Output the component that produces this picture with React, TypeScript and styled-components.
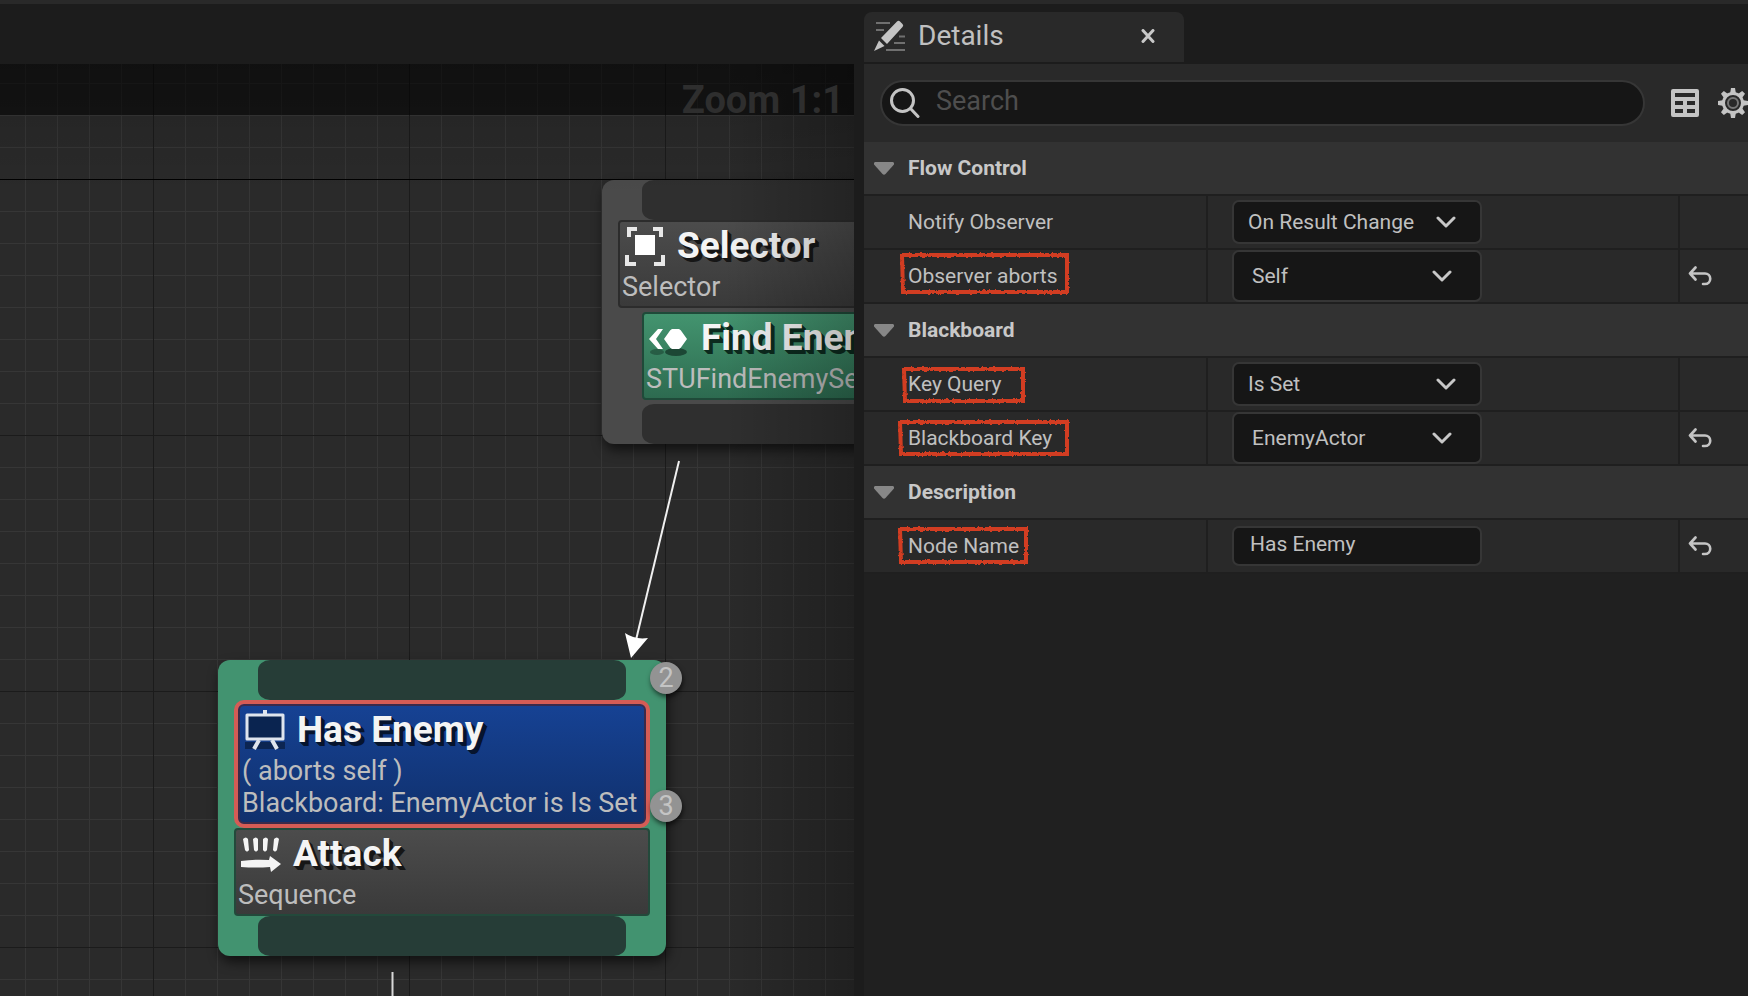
import React from "react";
import styled, { createGlobalStyle } from "styled-components";

const GlobalStyle = createGlobalStyle`
  *, *::before, *::after { box-sizing: border-box; }
  body { margin: 0; background: #1c1c1c; color: #c0c0c0; font-family: Roboto, "Liberation Sans", sans-serif; }
  button, input, select { font: inherit; color: inherit; }
`;

const Editor = styled.div`
  display: grid;
  grid-template-columns: minmax(0, 427fr) minmax(0, 442fr);
  column-gap: 10px;
  min-height: 100vh;
  overflow: hidden;
  border-top: 4px solid #292929;
  background: #1c1c1c;
`;

/* ---------- graph ---------- */

const GraphColumn = styled.main`
  display: flex;
  flex-direction: column;
  padding-top: 60px;
`;

const Canvas = styled.section`
  position: relative;
  flex: 1;
  overflow: hidden;
  background-color: #2a2a2a;
  background-image:
    linear-gradient(#000, #000),
    linear-gradient(90deg, #1b1b1b 1px, transparent 1px),
    linear-gradient(#1b1b1b 1px, transparent 1px),
    linear-gradient(90deg, #363636 1px, transparent 1px),
    linear-gradient(#363636 1px, transparent 1px);
  background-size: 100% 1px, 256px 256px, 256px 256px, 32px 32px, 32px 32px;
  background-position: 0 115px, 153px 0, 0 115px, 25px 0, 0 19px;
  background-repeat: no-repeat, repeat, repeat, repeat, repeat;
`;

const Vignette = styled.div`
  position: absolute;
  inset: 0;
  pointer-events: none;
  background:
    linear-gradient(rgba(0, 0, 0, 0.16), transparent 130px),
    linear-gradient(270deg, rgba(0, 0, 0, 0.24), transparent 130px);
`;

const ZoomBar = styled.div`
  position: absolute;
  top: 0;
  left: 0;
  right: 0;
  height: 51px;
  padding-right: 10px;
  background: rgba(0, 0, 0, 0.52);
  color: #2e2e2e;
  font-size: 38px;
  font-weight: 700;
  line-height: 72px;
  text-align: right;
  white-space: nowrap;
`;

const Wires = styled.svg`
  position: absolute;
  top: 0;
  left: 0;
  width: 100%;
  height: 100%;
`;

const Node = styled.article<{ $x: number; $y: number; $w: number; $tone: string }>`
  position: absolute;
  left: ${(p) => p.$x}px;
  top: ${(p) => p.$y}px;
  width: ${(p) => p.$w}px;
  padding: 0 16px;
  border-radius: 12px;
  background: ${(p) => p.$tone};
  box-shadow: 2px 6px 12px rgba(0, 0, 0, 0.6);
`;

const Pin = styled.div<{ $tone: string }>`
  height: 40px;
  margin: 0 24px;
  border-radius: 12px / 10px;
  background: ${(p) => p.$tone};
`;

const Block = styled.div<{ $tone: string; $edge: string; $inset?: boolean }>`
  height: 88px;
  margin-left: ${(p) => (p.$inset ? 24 : 0)}px;
  margin-top: ${(p) => (p.$inset ? 4 : 0)}px;
  margin-bottom: ${(p) => (p.$inset ? 4 : 0)}px;
  padding: 2px;
  border: 2px solid ${(p) => p.$edge};
  border-radius: 4px;
  background: ${(p) => p.$tone};
`;

const SelectedBlock = styled(Block)`
  height: 128px;
  padding: 4px 4px 0;
  border: 4px solid #d55c55;
  border-radius: 10px;
  box-shadow: inset 0 0 0 2px #3b2a4a;
`;

const NodeHeading = styled.div`
  display: flex;
  align-items: center;
  gap: 12px;
  height: 44px;
  margin-bottom: 3px;
  padding-left: 3px;
`;

const NodeTitle = styled.h2<{ $shade: string }>`
  margin: 0;
  color: #f4f4f4;
  font-size: 37px;
  font-weight: 700;
  line-height: 40px;
  white-space: nowrap;
  text-shadow: 1px 1px 0 ${(p) => p.$shade}, 2px 2px 0 ${(p) => p.$shade}, 3px 3px 0 ${(p) => p.$shade}, 4px 4px 0 ${(p) => p.$shade};
`;

const NodeText = styled.p`
  margin: 0;
  color: #bdbdbd;
  font-size: 27px;
  line-height: 32px;
  white-space: nowrap;
`;

const Badge = styled.span<{ $y: number }>`
  position: absolute;
  right: -16px;
  top: ${(p) => p.$y}px;
  width: 32px;
  height: 32px;
  border-radius: 50%;
  background: #939393;
  color: #c4c4c4;
  font-size: 27px;
  line-height: 32px;
  text-align: center;
  box-shadow: 1px 3px 5px rgba(0, 0, 0, 0.6);
`;

/* ---------- details panel ---------- */

const Panel = styled.aside`
  display: flex;
  flex-direction: column;
  min-width: 0;
  padding-top: 8px;
`;

const Tab = styled.div`
  display: flex;
  align-items: center;
  width: 320px;
  height: 50px;
  margin-bottom: 2px;
  padding: 0 29px 3px 10px;
  border-radius: 8px 8px 0 0;
  background: #292929;
`;

const TabTitle = styled.h1`
  flex: 1;
  margin: 0 0 0 12px;
  font-size: 28px;
  font-weight: 400;
  line-height: 40px;
`;

const IconButton = styled.button`
  display: flex;
  align-items: center;
  justify-content: center;
  flex: none;
  padding: 0;
  border: 0;
  background: none;
  color: #c4c4c4;
`;

const PanelBody = styled.div`
  flex: 1;
  background: #202020;
`;

const Toolbar = styled.div`
  display: flex;
  align-items: center;
  height: 78px;
  padding-left: 16px;
  background: #292929;
`;

const SearchBox = styled.label`
  display: flex;
  align-items: center;
  flex: 1;
  min-width: 0;
  height: 46px;
  margin-right: 26px;
  padding: 0 20px 0 8px;
  border: 2px solid #363636;
  border-radius: 23px;
  background: #161616;
`;

const SearchInput = styled.input`
  flex: 1;
  min-width: 0;
  height: 36px;
  margin: 0 0 4px 16px;
  padding: 0;
  border: 0;
  outline: 0;
  background: none;
  font-size: 27px;
  &::placeholder { color: #4e4e4e; opacity: 1; }
`;

const ToolIcons = styled.div`
  display: flex;
  align-items: center;
  gap: 19px;
`;

const SectionHeader = styled.h3`
  display: flex;
  align-items: center;
  gap: 14px;
  height: 54px;
  margin: 0;
  padding-left: 10px;
  border-bottom: 2px solid #1f1f1f;
  background: #323232;
  color: #c8c8c8;
  font-size: 21px;
  font-weight: 700;
`;

const Row = styled.div`
  display: grid;
  grid-template-columns: 344px minmax(0, 1fr) 68px;
  height: 54px;
  border-bottom: 2px solid #1f1f1f;
  background: #292929;
`;

const Cell = styled.div<{ $kind: "label" | "value" | "reset" }>`
  display: flex;
  align-items: center;
  padding-left: ${(p) => ({ label: 44, value: 24, reset: 8 })[p.$kind]}px;
  border-right: ${(p) => (p.$kind === "reset" ? "0" : "2px solid #1f1f1f")};
`;

const Label = styled.label`
  position: relative;
  font-size: 21px;
  line-height: 28px;
  white-space: nowrap;
`;

const Marker = styled.svg`
  position: absolute;
  overflow: visible;
  pointer-events: none;
`;

const Picker = styled.div<{ $tall?: boolean }>`
  display: grid;
  align-items: center;
  width: 250px;
  height: ${(p) => (p.$tall ? 52 : 44)}px;
  > * { grid-area: 1 / 1; }
  > svg { justify-self: end; margin-right: ${(p) => (p.$tall ? 30 : 26)}px; pointer-events: none; }
`;

const Select = styled.select<{ $tall?: boolean }>`
  appearance: none;
  width: 100%;
  height: 100%;
  padding: 0 50px 0 ${(p) => (p.$tall ? 18 : 14)}px;
  border: 2px solid #363636;
  border-radius: 7px;
  background: #161616;
  font-size: 21px;
`;

const TextField = styled.input`
  width: 250px;
  height: 40px;
  padding: 0 16px 4px;
  border: 2px solid #363636;
  border-radius: 7px;
  background: #161616;
  font-size: 21px;
`;

/* ---------- icons ---------- */

const TreeIcon = () => (
  <svg width="20" height="13" viewBox="0 0 20 13">
    <path d="M1 0h18q2 1 0.500 3l-8 9q-1.500 1.500-3 0l-8-9q-1.500-2 0.500-3z" fill="#878787" />
  </svg>
);

const ChevronIcon = () => (
  <svg width="20" height="12" viewBox="0 0 20 12" fill="none" stroke="#c8c8c8" strokeWidth="3" strokeLinecap="round" strokeLinejoin="round">
    <path d="M2 2l8 8 8-8" />
  </svg>
);

const ResetIcon = () => (
  <svg width="24" height="20" viewBox="0 0 24 20" fill="none" stroke="#c4c4c4" strokeWidth="2.600" strokeLinecap="round" strokeLinejoin="round">
    <path d="M7.500 1.500L2 7.500l5.500 6M2 7.500h15a5 5 0 0 1 0 10.500h-2" />
  </svg>
);

const DetailsIcon = () => (
  <svg width="32" height="32" viewBox="0 0 32 32">
    <path d="M2 3h14M2 10h8M25 16.500h6M20 23h11M12 30h19" stroke="#707070" strokeWidth="2" />
    <path d="M23 1.500q1.500-1.500 3 0l2.500 2.500q1.500 1.500 0 3L13 24 7 18z" fill="#c4c4c4" />
    <path d="M5 20.500l5.500 5.500L0 31z" fill="#c4c4c4" />
  </svg>
);

const CloseIcon = () => (
  <svg width="14" height="14" viewBox="0 0 14 14" stroke="#c8c8c8" strokeWidth="3" strokeLinecap="round">
    <path d="M2 1.500l10 11M12 1.500L2 12.500" />
  </svg>
);

const SearchIcon = () => (
  <svg width="30" height="30" viewBox="0 0 30 30" fill="none" stroke="#c4c4c4" strokeWidth="3" strokeLinecap="round">
    <circle cx="12.500" cy="12.500" r="11" />
    <path d="M20.500 20.500l7.500 8" />
  </svg>
);

const TableIcon = () => (
  <svg width="28" height="28" viewBox="0 0 28 28">
    <path fillRule="evenodd" fill="#c4c4c4" d="M2 0h24a2 2 0 0 1 2 2v24a2 2 0 0 1-2 2H2a2 2 0 0 1-2-2V2a2 2 0 0 1 2-2zM4 4v4h20V4zM4 12v4h8v-4zM16 12v4h8v-4zM4 20v4h8v-4zM16 20v4h8v-4z" />
  </svg>
);

const GearIcon = () => (
  <svg width="30" height="30" viewBox="-15 -15 30 30" fill="none">
    {[0, 45, 90, 135, 180, 225, 270, 315].map((a) => (
      <path key={a} transform={`rotate(${a})`} d="M-3 -9L-2 -15h4L3 -9z" fill="#c4c4c4" />
    ))}
    <circle r="9.500" stroke="#c4c4c4" strokeWidth="3" />
    <circle r="5" stroke="#777" strokeWidth="2" />
  </svg>
);

const SelectorIcon = () => (
  <svg width="40" height="40" viewBox="0 0 40 40">
    <path d="M4 11V3h8M28 3h8v8M38 29v9h-9M11 38H2v-9" fill="none" stroke="#e8e8e8" strokeWidth="4" />
    <path d="M10 9h20v20H10z" fill="#fff" />
  </svg>
);

const ServiceIcon = () => (
  <svg width="40" height="36" viewBox="0 0 40 36">
    <ellipse cx="27" cy="32" rx="11" ry="4" fill="#15382a" opacity="0.8" />
    <ellipse cx="8" cy="32" rx="7" ry="3" fill="#15382a" opacity="0.5" />
    <path d="M9 9h5L7 19l7 10H9L0 19z" fill="#fff" />
    <path d="M23 9h7q2 1 3 3l5 7-5 7q-1 2-3 3h-7q-2-1-3-3l-5-7 5-7q1-2 3-3z" fill="#fff" />
  </svg>
);

const BoardIcon = () => (
  <svg width="40" height="40" viewBox="0 0 40 40" fill="none" stroke="#dfe5ee">
    <path d="M0 32h40v7H0z" fill="#0c2552" stroke="none" />
    <path d="M2 5h36v24H2z" fill="#0a2450" strokeWidth="3" strokeLinejoin="round" />
    <path d="M20 0v5M14 30l-5 9M27 30l5 9" strokeWidth="4" />
  </svg>
);

const SequenceIcon = () => (
  <svg width="40" height="36" viewBox="0 0 40 36" fill="#f4f4f4">
    <path d="M2 3q3-3 5 0l1 11q-2 3-4 0zM12 3q3-3 5 0v11q-2 3-4 0zM22 3q3-3 5 0l-1 11q-2 3-4 0zM33 3q3-3 5 0l-2 11q-2 3-4 0z" />
    <path d="M0 25q14-2 28-1l1-4 11 8-10 8-1-5q-14 1-29 0z" />
  </svg>
);

/* hand-drawn red frame round a property name */
const Highlight = ({ x, y, w, h }: { x: number; y: number; w: number; h: number }) => (
  <Marker style={{ left: x, top: y }} width={w} height={h} fill="none">
    <filter id={`rough${w}`} x="-10%" y="-20%" width="120%" height="140%">
      <feTurbulence type="fractalNoise" baseFrequency="0.35" numOctaves="2" />
      <feDisplacementMap in="SourceGraphic" scale="3" xChannelSelector="R" yChannelSelector="G" />
    </filter>
    <path d={`M2 2H${w - 2}V${h - 2}H3Z`} stroke="#d23c20" strokeWidth="4" filter={`url(#rough${w})`} />
  </Marker>
);

type Property = {
  name: string;
  value: string;
  kind: "select" | "tallSelect" | "text";
  reset?: boolean;
  mark?: { x: number; y: number; w: number; h: number };
};

const sections: { title: string; rows: Property[] }[] = [
  {
    title: "Flow Control",
    rows: [
      { name: "Notify Observer", value: "On Result Change", kind: "select" },
      { name: "Observer aborts", value: "Self", kind: "tallSelect", reset: true, mark: { x: -8, y: -9, w: 169, h: 41 } },
    ],
  },
  {
    title: "Blackboard",
    rows: [
      { name: "Key Query", value: "Is Set", kind: "select", mark: { x: -6, y: -3, w: 123, h: 36 } },
      { name: "Blackboard Key", value: "EnemyActor", kind: "tallSelect", reset: true, mark: { x: -10, y: -4, w: 171, h: 36 } },
    ],
  },
  {
    title: "Description",
    rows: [{ name: "Node Name", value: "Has Enemy", kind: "text", reset: true, mark: { x: -10, y: -5, w: 130, h: 37 } }],
  },
];

const PropertyRow = ({ name, value, kind, reset, mark }: Property) => {
  const id = name.toLowerCase().replace(" ", "-");
  const tall = kind === "tallSelect";
  return (
    <Row>
      <Cell $kind="label">
        <Label htmlFor={id}>
          {name}
          {mark && <Highlight {...mark} />}
        </Label>
      </Cell>
      <Cell $kind="value">
        {kind === "text" ? (
          <TextField id={id} type="text" defaultValue={value} />
        ) : (
          <Picker $tall={tall}>
            <Select id={id} $tall={tall} defaultValue={value}>
              <option>{value}</option>
            </Select>
            <ChevronIcon />
          </Picker>
        )}
      </Cell>
      <Cell $kind="reset">
        {reset && (
          <IconButton type="button" aria-label={`Reset ${name}`}>
            <ResetIcon />
          </IconButton>
        )}
      </Cell>
    </Row>
  );
};

const grayBlock = "linear-gradient(#4c4c4c, #3a3a3a)";

export default function App() {
  return (
    <>
      <GlobalStyle />
      <Editor>
        <GraphColumn>
          <Canvas>
            <Node $x={602} $y={116} $w={448} $tone="#4a4a4a">
              <Pin $tone="#2f2f2f" />
              <Block $tone={grayBlock} $edge="#2c2c2c">
                <NodeHeading>
                  <SelectorIcon />
                  <NodeTitle $shade="#161616">Selector</NodeTitle>
                </NodeHeading>
                <NodeText>Selector</NodeText>
              </Block>
              <Block $tone="linear-gradient(#43946f, #2d6b50)" $edge="#1f4a39" $inset>
                <NodeHeading>
                  <ServiceIcon />
                  <NodeTitle $shade="#0c2a1e">Find Enemy</NodeTitle>
                </NodeHeading>
                <NodeText>STUFindEnemyService</NodeText>
              </Block>
              <Pin $tone="#2f2f2f" />
            </Node>
            <Node $x={218} $y={596} $w={448} $tone="#429370">
              <Pin $tone="#263d37" />
              <SelectedBlock $tone="linear-gradient(#164294, #10306c)" $edge="#d55c55">
                <NodeHeading>
                  <BoardIcon />
                  <NodeTitle $shade="#06142e">Has Enemy</NodeTitle>
                </NodeHeading>
                <NodeText>( aborts self )</NodeText>
                <NodeText>Blackboard: EnemyActor is Is Set</NodeText>
              </SelectedBlock>
              <Block $tone={grayBlock} $edge="#23493b">
                <NodeHeading>
                  <SequenceIcon />
                  <NodeTitle $shade="#161616">Attack</NodeTitle>
                </NodeHeading>
                <NodeText>Sequence</NodeText>
              </Block>
              <Pin $tone="#263d37" />
              <Badge $y={2}>2</Badge>
              <Badge $y={130}>3</Badge>
            </Node>
            <Wires>
              <path d="M679 397L636 576" stroke="#f0f0f0" strokeWidth="2" />
              <path d="M631 594L625 569Q635 576 648 574z" fill="#fff" />
              <path d="M392.500 908V2000" stroke="#d8d8d8" strokeWidth="2" />
            </Wires>
            <Vignette />
            <ZoomBar>Zoom 1:1</ZoomBar>
          </Canvas>
        </GraphColumn>
        <Panel>
          <Tab>
            <DetailsIcon />
            <TabTitle>Details</TabTitle>
            <IconButton type="button" aria-label="Close tab">
              <CloseIcon />
            </IconButton>
          </Tab>
          <PanelBody>
            <Toolbar>
              <SearchBox>
                <SearchIcon />
                <SearchInput type="search" placeholder="Search" aria-label="Search" />
              </SearchBox>
              <ToolIcons>
                <IconButton type="button" aria-label="Open property matrix">
                  <TableIcon />
                </IconButton>
                <IconButton type="button" aria-label="Settings">
                  <GearIcon />
                </IconButton>
              </ToolIcons>
            </Toolbar>
            {sections.map((section) => (
              <section key={section.title}>
                <SectionHeader>
                  <TreeIcon />
                  {section.title}
                </SectionHeader>
                {section.rows.map((row) => (
                  <PropertyRow key={row.name} {...row} />
                ))}
              </section>
            ))}
          </PanelBody>
        </Panel>
      </Editor>
    </>
  );
}
